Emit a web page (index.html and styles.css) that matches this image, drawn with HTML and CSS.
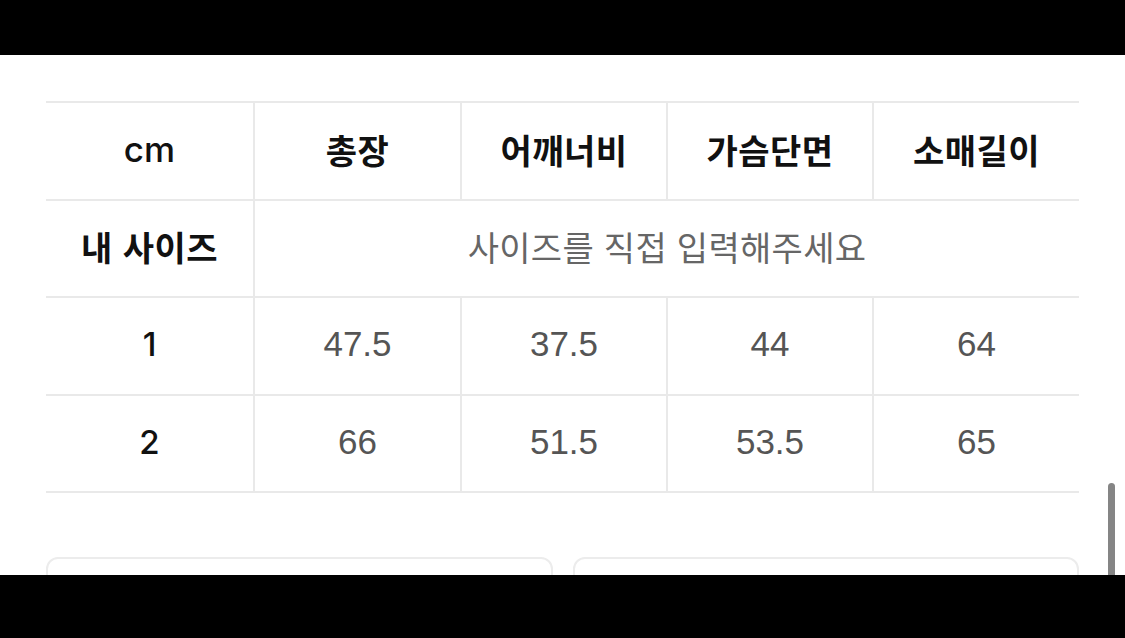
FILE: index.html
```html
<!DOCTYPE html>
<html lang="ko">
<head>
<meta charset="utf-8">
<title>사이즈 표</title>
<link rel="stylesheet" href="styles.css">
</head>
<body>
<div class="bar-top"></div>
<main class="screen">
  <div class="content">
    <div class="size-table">
      <div class="cell head first latin unit">cm</div>
      <div class="cell head">총장</div>
      <div class="cell head">어깨너비</div>
      <div class="cell head">가슴단면</div>
      <div class="cell head last">소매길이</div>

      <div class="cell head first">내 사이즈</div>
      <div class="cell hint span4 last">사이즈를 직접 입력해주세요</div>

      <div class="cell head first latin">1</div>
      <div class="cell val">47.5</div>
      <div class="cell val">37.5</div>
      <div class="cell val">44</div>
      <div class="cell val last">64</div>

      <div class="cell head first latin">2</div>
      <div class="cell val">66</div>
      <div class="cell val">51.5</div>
      <div class="cell val">53.5</div>
      <div class="cell val last">65</div>
    </div>
    <div class="cards">
      <div class="card"></div>
      <div class="card"></div>
    </div>
  </div>
  <div class="scrollbar"></div>
</main>
<div class="bar-bottom"></div>
</body>
</html>
```

FILE: styles.css
```css
html, body {
  margin: 0;
  padding: 0;
  background: #000;
}
body {
  width: 1125px;
  height: 638px;
  overflow: hidden;
  font-family: "Noto Sans CJK KR", "Noto Sans", "Liberation Sans", sans-serif;
}
.bar-top {
  height: 55px;
  background: #000;
}
.bar-bottom {
  height: 63px;
  background: #000;
}
.screen {
  position: relative;
  height: 520px;
  background: #fff;
  overflow: hidden;
}
.content {
  padding: 46px 46px 0 46px;
}
.size-table {
  width: 1033px;
  display: grid;
  grid-template-columns: 209px 207px 206px 206px 205px;
  grid-auto-rows: 97.5px;
  border-top: 2px solid #e9e9e9;
}
.cell {
  box-sizing: border-box;
  display: flex;
  align-items: center;
  justify-content: center;
  padding-bottom: 3px;
  border-bottom: 2px solid #e9e9e9;
  border-right: 2px solid #e9e9e9;
  font-size: 34px;
  color: #111;
}
.cell.last {
  border-right: none;
}
.head {
  font-weight: 700;
  color: #111;
  letter-spacing: 0.5px;
}
.head.latin {
  font-family: "Inter", "Liberation Sans", sans-serif;
  font-weight: 500;
  font-size: 33px;
  letter-spacing: 0;
}
.head.unit {
  font-size: 35px;
}
.span4 {
  grid-column: span 4;
}
.hint {
  color: #666;
  font-size: 34px;
  font-weight: 400;
  letter-spacing: 0.3px;
}
.val {
  color: #555;
  font-family: "Liberation Sans", "Noto Sans", sans-serif;
  font-size: 35px;
}
.cards {
  display: flex;
  gap: 20px;
  margin-top: 64px;
  width: 1033px;
}
.card {
  flex: 1;
  height: 60px;
  border: 2px solid #ececec;
  border-radius: 12px;
}
.scrollbar {
  position: absolute;
  right: 10px;
  top: 428px;
  width: 7px;
  height: 110px;
  border-radius: 4px;
  background: #858585;
}
```
